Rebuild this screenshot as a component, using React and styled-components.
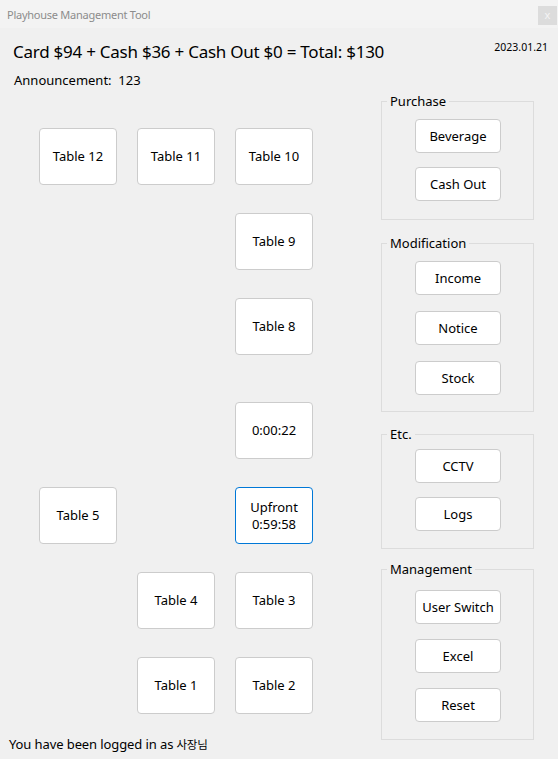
import styled, { createGlobalStyle } from 'styled-components';

const GlobalStyle = createGlobalStyle`
  html, body {
    margin: 0;
    padding: 0;
    background: #f0f0f0;
  }
  * {
    box-sizing: border-box;
  }
`;

const tables = [
  { label: 'Table 12', row: 1, col: 1 },
  { label: 'Table 11', row: 1, col: 2 },
  { label: 'Table 10', row: 1, col: 3 },
  { label: 'Table 9', row: 2, col: 3 },
  { label: 'Table 8', row: 3, col: 3 },
  { label: '0:00:22', row: 4, col: 3 },
  { label: 'Table 5', row: 5, col: 1 },
  { label: 'Upfront\n0:59:58', row: 5, col: 3, active: true },
  { label: 'Table 4', row: 6, col: 2 },
  { label: 'Table 3', row: 6, col: 3 },
  { label: 'Table 1', row: 7, col: 2 },
  { label: 'Table 2', row: 7, col: 3 },
];

// spacing differs a little between the group boxes in the original form
const groups = [
  { title: 'Purchase', mt: 0, top: 9, bottom: 18, gap: 14, buttons: ['Beverage', 'Cash Out'] },
  { title: 'Modification', mt: 14, top: 9, bottom: 16, gap: 16, buttons: ['Income', 'Notice', 'Stock'] },
  { title: 'Etc.', mt: 13, top: 6, bottom: 17, gap: 14, buttons: ['CCTV', 'Logs'] },
  { title: 'Management', mt: 11, top: 12, bottom: 17, gap: 15, buttons: ['User Switch', 'Excel', 'Reset'] },
];

export default function App() {
  return (
    <>
      <GlobalStyle />
      <Window>
        <TitleBar>
          <Title>Playhouse Management Tool</Title>
          <CloseButton>x</CloseButton>
        </TitleBar>
        <Header>
          <Totals>Card $94 + Cash $36 + Cash Out $0 = Total: $130</Totals>
          <DateText>2023.01.21</DateText>
        </Header>
        <Announcement>Announcement:&nbsp; 123</Announcement>
        <Main>
          <LeftColumn>
            <TableGrid>
              {tables.map((t) => (
                <TableButton
                  key={t.label}
                  $row={t.row}
                  $col={t.col}
                  $active={t.active}
                >
                  {t.label}
                </TableButton>
              ))}
            </TableGrid>
            <Footer>
              You have been logged in as <UserName>사장님</UserName>
            </Footer>
          </LeftColumn>
          <Sidebar>
            {groups.map((g) => (
              <Group key={g.title} $mt={g.mt}>
                <Legend>{g.title}</Legend>
                <ButtonStack $top={g.top} $bottom={g.bottom} $gap={g.gap}>
                  {g.buttons.map((b) => (
                    <ActionButton key={b}>{b}</ActionButton>
                  ))}
                </ButtonStack>
              </Group>
            ))}
          </Sidebar>
        </Main>
      </Window>
    </>
  );
}

const Window = styled.div`
  width: 558px;
  height: 759px;
  overflow: hidden;
  background: #f0f0f0;
  font-family: 'Noto Sans', 'Noto Sans CJK KR', sans-serif;
  color: #000;
  display: flex;
  flex-direction: column;
`;

const TitleBar = styled.div`
  height: 28px;
  background: #f3f3f3;
  display: flex;
  align-items: center;
  justify-content: space-between;
  padding: 0 1px 0 7px;
`;

const Title = styled.span`
  font-size: 11px;
  letter-spacing: -0.25px;
  color: #8c8c8c;
`;

const CloseButton = styled.div`
  width: 19px;
  height: 19px;
  margin-top: 3px;
  background: #dcdcdc;
  color: #f4f4f4;
  font-size: 11px;
  line-height: 18px;
  text-align: center;
`;

const Header = styled.div`
  display: flex;
  justify-content: space-between;
  align-items: flex-start;
  padding: 12px 10px 0 13px;
`;

const Totals = styled.div`
  font-size: 17px;
  letter-spacing: -0.25px;
  line-height: 24px;
`;

const DateText = styled.div`
  font-size: 10.5px;
  line-height: 15px;
`;

const Announcement = styled.div`
  font-size: 13px;
  line-height: 18px;
  margin-top: 7px;
  padding-left: 14px;
`;

const Main = styled.div`
  display: flex;
  align-items: flex-start;
  justify-content: space-between;
  padding-right: 24px;
`;

const LeftColumn = styled.div`
  display: flex;
  flex-direction: column;
  padding-left: 9px;
`;

const TableGrid = styled.div`
  display: grid;
  grid-template-columns: repeat(3, 78px);
  grid-template-rows: 57px 57px 57px 76px 57px 57px 57px;
  column-gap: 20px;
  row-gap: 28px;
  align-items: end;
  margin: 39px 0 0 30px;
`;

const TableButton = styled.div`
  grid-row: ${({ $row }) => $row};
  grid-column: ${({ $col }) => $col};
  height: 57px;
  background: #fff;
  border: 1px solid ${({ $active }) => ($active ? '#0078d7' : '#cccccc')};
  border-radius: 4px;
  display: flex;
  align-items: center;
  justify-content: center;
  text-align: center;
  white-space: pre-line;
  font-size: 13px;
  line-height: 17px;
`;

const Footer = styled.div`
  font-size: 13px;
  line-height: 18px;
  margin-top: 21px;
  letter-spacing: -0.1px;
  white-space: nowrap;
`;

const UserName = styled.span`
  font-size: 11.5px;
  letter-spacing: -0.3px;
`;

const Sidebar = styled.div`
  width: 153px;
  display: flex;
  flex-direction: column;
  margin-top: 3px;
`;

const Group = styled.fieldset`
  margin: ${({ $mt }) => $mt}px 0 0;
  padding: 0;
  min-inline-size: 0;
  border: 1px solid #dcdcdc;
`;

const Legend = styled.legend`
  margin-left: 5px;
  padding: 0 3px;
  font-size: 13px;
  line-height: 18px;
`;

const ButtonStack = styled.div`
  display: flex;
  flex-direction: column;
  gap: ${({ $gap }) => $gap}px;
  padding: ${({ $top }) => $top}px 0 ${({ $bottom }) => $bottom}px 33px;
`;

const ActionButton = styled.div`
  width: 86px;
  height: 34px;
  background: #fff;
  border: 1px solid #cccccc;
  border-radius: 4px;
  display: flex;
  align-items: center;
  justify-content: center;
  font-size: 13px;
`;
